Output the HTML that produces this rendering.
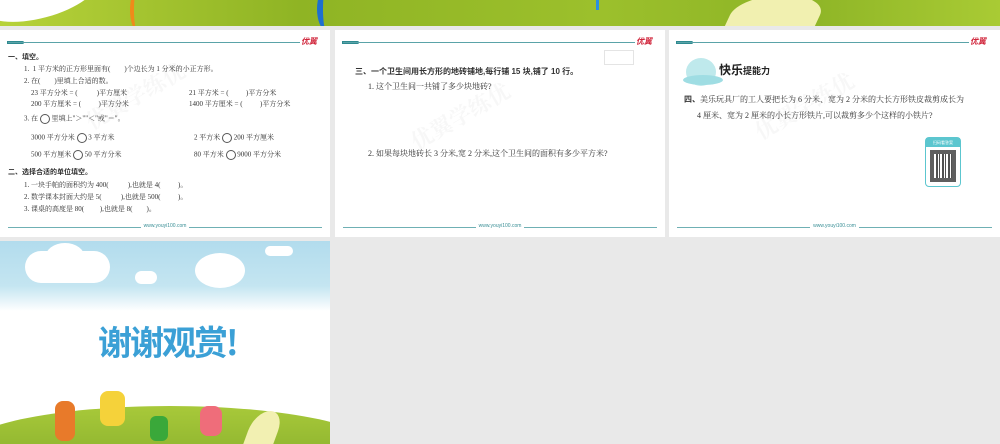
<!DOCTYPE html>
<html><head><meta charset="utf-8"><style>
*{margin:0;padding:0;box-sizing:border-box}
html{overflow:hidden}
body{width:1000px;height:444px;background:#e9e9e9;position:relative;overflow:hidden;font-family:"Liberation Serif","Noto Serif CJK SC",serif;color:#333}
.ban{position:absolute;left:0;top:0;width:1000px;height:26px;background:linear-gradient(90deg,#b7d23a,#8fb424 30%,#9cc02c 60%,#8db426 80%,#a9cb34);overflow:hidden}
.p{position:absolute;background:#fff;top:30px;height:207px;overflow:hidden}
.hl{position:absolute;left:8px;top:12px;width:292px;height:1px;background:#5aa3a8}
.hk{position:absolute;left:7px;top:11px;width:17px;height:3px;background:#2f8a90;border-radius:0 2px 2px 0}
.lg{position:absolute;left:301px;top:6px;font:italic bold 8px "Liberation Sans","Noto Sans CJK SC",sans-serif;color:#d0243a}
.ft{position:absolute;left:8px;right:8px;top:197px;height:1px;background:#6fb0b4}
.fu{position:absolute;left:0;right:0;top:193px;text-align:center;font:5px "Liberation Sans",sans-serif;color:#3a8f96}
.fu span{background:#fff;padding:0 3px}
.t{position:absolute;font-size:7px;white-space:nowrap;line-height:8px}
.b{font-weight:bold;font-family:"Liberation Sans","Noto Sans CJK SC",sans-serif}
.c{display:inline-block;width:10px;height:10px;border:1px solid #555;border-radius:50%;vertical-align:middle}
.wm{position:absolute;font-size:22px;color:rgba(0,0,0,.03);transform:rotate(-30deg);white-space:nowrap;font-weight:bold}
</style></head><body>
<div class="ban">
<div style="position:absolute;left:-20px;top:-30px;width:120px;height:48px;border-radius:50%;background:#fff;transform:rotate(-15deg)"></div>
<div style="position:absolute;left:130px;top:-10px;width:14px;height:40px;border-left:4px solid #f08a1a;border-radius:50%"></div>
<div style="position:absolute;left:317px;top:-12px;width:18px;height:42px;border-left:6px solid #1e6fd0;border-radius:50%"></div>
<div style="position:absolute;left:596px;top:0;width:3px;height:10px;background:#2a8fe0"></div>
<div style="position:absolute;left:730px;top:-5px;width:90px;height:40px;background:#f1f0b0;border-radius:50% 50% 0 0;transform:skewX(-25deg)"></div>
</div>

<div class="p" style="left:0;width:330px">
<div class="hk"></div><div class="hl"></div><div class="lg">优翼</div>
<div class="wm" style="left:80px;top:50px">优翼学练优</div>
<div class="t b" style="left:8px;top:24px">一、填空。</div>
<div class="t" style="left:24px;top:35px">1.&nbsp; 1 平方米的正方形里面有(&nbsp;&nbsp;&nbsp;&nbsp;&nbsp;&nbsp;&nbsp;&nbsp;)个边长为 1 分米的小正方形。</div>
<div class="t" style="left:24px;top:47px">2. 在(&nbsp;&nbsp;&nbsp;&nbsp;&nbsp;&nbsp;&nbsp;&nbsp;)里填上合适的数。</div>
<div class="t" style="left:31px;top:59px">23 平方分米 = (&nbsp;&nbsp;&nbsp;&nbsp;&nbsp;&nbsp;&nbsp;&nbsp;&nbsp;&nbsp;&nbsp;)平方厘米</div>
<div class="t" style="left:189px;top:59px">21 平方米 = (&nbsp;&nbsp;&nbsp;&nbsp;&nbsp;&nbsp;&nbsp;&nbsp;&nbsp;&nbsp;)平方分米</div>
<div class="t" style="left:31px;top:70px">200 平方厘米 = (&nbsp;&nbsp;&nbsp;&nbsp;&nbsp;&nbsp;&nbsp;&nbsp;&nbsp;&nbsp;)平方分米</div>
<div class="t" style="left:189px;top:70px">1400 平方厘米 = (&nbsp;&nbsp;&nbsp;&nbsp;&nbsp;&nbsp;&nbsp;&nbsp;&nbsp;&nbsp;)平方分米</div>
<div class="t" style="left:24px;top:84px">3. 在 <span class="c"></span> 里填上"＞""＜"或"＝"。</div>
<div class="t" style="left:31px;top:103px">3000 平方分米 <span class="c"></span> 3 平方米</div>
<div class="t" style="left:194px;top:103px">2 平方米 <span class="c"></span> 200 平方厘米</div>
<div class="t" style="left:31px;top:120px">500 平方厘米 <span class="c"></span> 50 平方分米</div>
<div class="t" style="left:194px;top:120px">80 平方米 <span class="c"></span> 9000 平方分米</div>
<div class="t b" style="left:8px;top:139px">二、选择合适的单位填空。</div>
<div class="t" style="left:24px;top:151px">1. 一块手帕的面积约为 400(&nbsp;&nbsp;&nbsp;&nbsp;&nbsp;&nbsp;&nbsp;&nbsp;&nbsp;&nbsp;&nbsp;),也就是 4(&nbsp;&nbsp;&nbsp;&nbsp;&nbsp;&nbsp;&nbsp;&nbsp;&nbsp;&nbsp;)。</div>
<div class="t" style="left:24px;top:163px">2. 数学课本封面大约是 5(&nbsp;&nbsp;&nbsp;&nbsp;&nbsp;&nbsp;&nbsp;&nbsp;&nbsp;&nbsp;&nbsp;),也就是 500(&nbsp;&nbsp;&nbsp;&nbsp;&nbsp;&nbsp;&nbsp;&nbsp;&nbsp;&nbsp;)。</div>
<div class="t" style="left:24px;top:175px">3. 课桌的高度是 80(&nbsp;&nbsp;&nbsp;&nbsp;&nbsp;&nbsp;&nbsp;&nbsp;&nbsp;),也就是 8(&nbsp;&nbsp;&nbsp;&nbsp;&nbsp;&nbsp;&nbsp;&nbsp;)。</div>
<div class="ft"></div><div class="fu"><span>www.youyi100.com</span></div>
</div>

<div class="p" style="left:335px;width:330px">
<div class="hk"></div><div class="hl"></div><div class="lg">优翼</div>
<div style="position:absolute;left:269px;top:20px;width:30px;height:15px;border:1px solid #e4e4e4"></div>
<div class="wm" style="left:70px;top:70px">优翼学练优</div>
<div class="t b" style="left:20px;top:37px;font-size:8px;line-height:10px">三、一个卫生间用长方形的地砖铺地,每行铺 15 块,铺了 10 行。</div>
<div class="t" style="left:33px;top:52px;font-size:8px;line-height:10px">1. 这个卫生间一共铺了多少块地砖?</div>
<div class="t" style="left:33px;top:119px;font-size:8px;line-height:10px">2. 如果每块地砖长 3 分米,宽 2 分米,这个卫生间的面积有多少平方米?</div>
<div class="ft"></div><div class="fu"><span>www.youyi100.com</span></div>
</div>

<div class="p" style="left:669px;width:331px">
<div class="hk"></div><div class="hl"></div><div class="lg">优翼</div>
<div class="wm" style="left:80px;top:60px">优翼学练优</div>
<div style="position:absolute;left:17px;top:28px;width:30px;height:28px;border-radius:50%;background:#bfe9ec"></div>
<div style="position:absolute;left:14px;top:45px;width:40px;height:10px;border-radius:50%;background:#9fdde3"></div>
<div class="t b" style="left:50px;top:33px;font-size:12px;line-height:14px;color:#222">快乐<span style="font-size:9px">提能力</span></div>
<div class="t b" style="left:15px;top:65px;font-size:8px;line-height:10px">四、<span style="font-weight:normal;font-family:'Liberation Serif','Noto Serif CJK SC',serif">美乐玩具厂的工人要把长为 6 分米、宽为 2 分米的大长方形铁皮裁剪成长为</span></div>
<div class="t" style="left:28px;top:81px;font-size:8px;line-height:10px">4 厘米、宽为 2 厘米的小长方形铁片,可以裁剪多少个这样的小铁片?</div>
<div style="position:absolute;left:256px;top:107px;width:36px;height:50px;border:1px solid #5cc6cf;border-radius:4px;background:#fff">
<div style="height:9px;background:#5cc6cf;color:#fff;font:4px 'Liberation Sans','Noto Sans CJK SC',sans-serif;text-align:center;line-height:9px">扫码看答案</div>
<div style="margin:3px 4px;height:32px;background:repeating-linear-gradient(90deg,#333 0 2px,#fff 2px 3px,#333 3px 4px,#fff 4px 6px),#333;opacity:.85;outline:4px solid #444;outline-offset:-4px"></div>
</div>
<div class="ft"></div><div class="fu"><span>www.youyi100.com</span></div>
</div>

<div style="position:absolute;left:0;top:241px;width:330px;height:203px;background:linear-gradient(#b2dced 0,#c4e5f1 45px,#fff 70px);overflow:hidden">
<div style="position:absolute;left:25px;top:10px;width:85px;height:32px;border-radius:20px;background:#fff"></div>
<div style="position:absolute;left:45px;top:2px;width:40px;height:30px;border-radius:50%;background:#fff"></div>
<div style="position:absolute;left:135px;top:30px;width:22px;height:13px;border-radius:7px;background:#fff"></div>
<div style="position:absolute;left:195px;top:12px;width:50px;height:35px;border-radius:50%;background:#fff"></div>
<div style="position:absolute;left:265px;top:5px;width:28px;height:10px;border-radius:5px;background:#fff"></div>
<div class="t" style="left:98px;top:80px;font:bold 34px/40px 'Noto Sans CJK SC',sans-serif;color:#3ba0d6;letter-spacing:-2px">谢谢观赏!</div>
<div style="position:absolute;left:-40px;top:165px;width:420px;height:90px;border-radius:50%;background:linear-gradient(#a8c93a,#7aa426)"></div>
<div style="position:absolute;left:248px;top:170px;width:30px;height:40px;background:#f2f0b2;border-radius:50% 50% 0 0;transform:skewX(-20deg)"></div>
<div style="position:absolute;left:55px;top:160px;width:20px;height:40px;background:#e87a2a;border-radius:8px"></div>
<div style="position:absolute;left:100px;top:150px;width:25px;height:35px;background:#f5d23a;border-radius:8px"></div>
<div style="position:absolute;left:150px;top:175px;width:18px;height:25px;background:#3aa83a;border-radius:6px"></div>
<div style="position:absolute;left:200px;top:165px;width:22px;height:30px;background:#ef6d7a;border-radius:8px"></div>
</div>
</body></html>
